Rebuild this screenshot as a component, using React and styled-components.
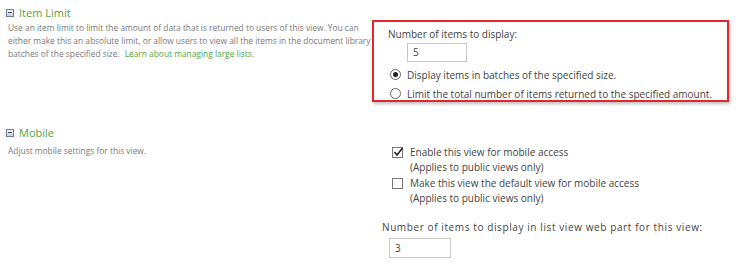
import React from "react";
import styled, { createGlobalStyle } from "styled-components";

const Global = createGlobalStyle`
  html, body { margin: 0; padding: 0; background: #fff; }
  body { font-family: "Open Sans", "Noto Sans", sans-serif; color: #444; }
  * { box-sizing: border-box; }
`;

const Page = styled.div`
  width: 736px;
  height: 264px;
  overflow: hidden;
  background: #fff;
`;

const Section = styled.div`
  display: grid;
  grid-template-columns: 372px 1fr;
  padding-top: ${(p) => p.$top}px;
`;

const Left = styled.div`
  padding-left: 6px;
  min-width: 0;
`;

const Heading = styled.div`
  display: flex;
  align-items: center;
  gap: 5px;
  height: 15px;
  font-size: 11px;
  color: #52a33f;
`;

const CollapseIcon = styled.span`
  width: 8px;
  height: 8px;
  border: 1px solid #6f7f96;
  background: linear-gradient(#f4f6fa, #c3cddb);
  display: flex;
  align-items: center;
  justify-content: center;
  &::after {
    content: "";
    width: 4px;
    height: 1px;
    background: #3a4a66;
  }
`;

const Desc = styled.div`
  margin-top: ${(p) => p.$gap}px;
  padding-left: 2px;
  font-size: 8.4px;
  line-height: 13px;
  color: #7a7a7a;
  width: 383px;
  white-space: nowrap;
`;

const Link = styled.span`
  color: #52a33f;
  padding-left: 5px;
`;

const RedBox = styled.div`
  position: relative;
  z-index: 1;
  background: #fff;
  margin-top: 15px;
  width: 357px;
  height: 82px;
  border: 2px solid #e3262b;
  box-shadow: 1px 2px 3px rgba(0, 0, 0, 0.25);
  padding: 5px 0 0 14px;
  font-size: 10px;
`;

const Label = styled.div`
  line-height: 14px;
  color: #444;
  letter-spacing: ${(p) => p.$spacing || 0}px;
`;

const Input = styled.div`
  width: ${(p) => p.$w}px;
  height: ${(p) => p.$h}px;
  border: 1px solid #c6c6c6;
  margin-left: ${(p) => p.$indent}px;
  margin-top: ${(p) => p.$mt}px;
  padding-left: 5px;
  font-size: 10px;
  line-height: ${(p) => p.$h - 2}px;
  color: #444;
`;

const OptionRow = styled.div`
  display: flex;
  align-items: center;
  gap: 6px;
  height: 19px;
  margin-left: 2px;
  margin-top: ${(p) => p.$mt || 0}px;
  color: #444;
`;

const Radio = styled.span`
  width: 11px;
  height: 11px;
  border-radius: 50%;
  border: 1px solid #666;
  background: #fff;
  display: flex;
  align-items: center;
  justify-content: center;
  &::after {
    content: "";
    width: 5px;
    height: 5px;
    border-radius: 50%;
    background: ${(p) => (p.$checked ? "#222" : "transparent")};
  }
`;

const Right2 = styled.div`
  padding: 19px 0 0 10px;
  font-size: 10px;
  color: #444;
`;

const CheckRow = styled.div`
  display: flex;
  align-items: center;
  gap: 7px;
  height: 16px;
  padding-left: 10px;
`;

const Box = styled.span`
  width: 11px;
  height: 11px;
  border: 1px solid #777;
  background: #fff;
  position: relative;
`;

const Note = styled.div`
  padding-left: 28px;
  line-height: 15px;
  height: 15px;
`;

const Spacer = styled.div`
  height: ${(p) => p.$h}px;
`;

const Check = () => (
  <svg width="11" height="10" viewBox="0 0 11 10" style={{ position: "absolute", left: 0, top: -1 }}>
    <path d="M1.5 5 L4 8 L9.5 1" fill="none" stroke="#222" strokeWidth="1.6" />
  </svg>
);

export default function App() {
  return (
    <Page>
      <Global />
      <Section $top={5}>
        <Left>
          <Heading>
            <CollapseIcon />
            Item Limit
          </Heading>
          <Desc $gap={1}>
            Use an item limit to limit the amount of data that is returned to users of this view. You can
            <br />
            either make this an absolute limit, or allow users to view all the items in the document library in
            <br />
            batches of the specified size.
            <Link>Learn about managing large lists.</Link>
          </Desc>
        </Left>
        <div>
          <RedBox>
            <Label>Number of items to display:</Label>
            <Input $indent={19} $w={60} $h={19} $mt={2}>
              5
            </Input>
            <OptionRow $mt={3}>
              <Radio $checked />
              Display items in batches of the specified size.
            </OptionRow>
            <OptionRow>
              <Radio />
              Limit the total number of items returned to the specified amount.
            </OptionRow>
          </RedBox>
        </div>
      </Section>
      <Section $top={23}>
        <Left>
          <Heading>
            <CollapseIcon />
            Mobile
          </Heading>
          <Desc $gap={4}>Adjust mobile settings for this view.</Desc>
        </Left>
        <Right2>
          <CheckRow>
            <Box>
              <Check />
            </Box>
            Enable this view for mobile access
          </CheckRow>
          <Note>(Applies to public views only)</Note>
          <CheckRow>
            <Box />
            Make this view the default view for mobile access
          </CheckRow>
          <Note>(Applies to public views only)</Note>
          <Spacer $h={14} />
          <Label $spacing={0.6}>Number of items to display in list view web part for this view:</Label>
          <Input $indent={7} $w={62} $h={20} $mt={4}>
            3
          </Input>
        </Right2>
      </Section>
    </Page>
  );
}
